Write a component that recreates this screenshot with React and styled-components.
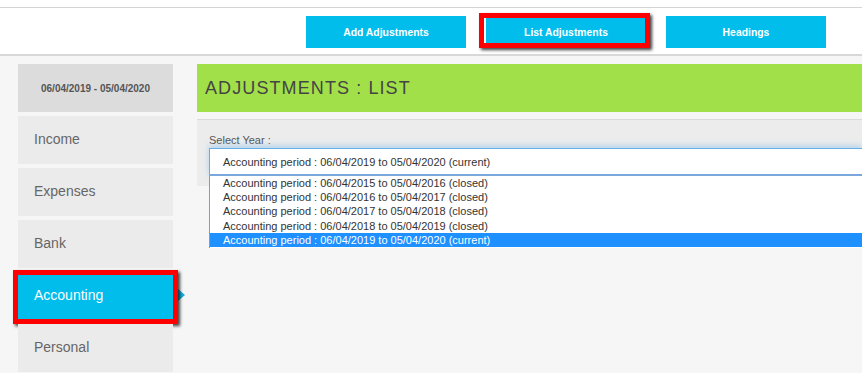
import React from "react";
import styled, { createGlobalStyle, css } from "styled-components";

const GlobalStyle = createGlobalStyle`
  html, body {
    margin: 0;
    padding: 0;
    background: #f6f6f6;
    overflow: hidden;
  }
  body {
    font-family: "Liberation Sans", Arial, sans-serif;
  }
`;

const CYAN = "#00bdeb";

const redFrame = css`
  &::after {
    content: "";
    position: absolute;
    border: 5px solid #ff0000;
    box-shadow: 2px 2px 3px rgba(0, 0, 0, 0.75);
    pointer-events: none;
  }
`;

const TopStrip = styled.div`
  background: #fff;
  padding-top: 7px;
`;

const Header = styled.header`
  height: 49px;
  box-sizing: border-box;
  border-top: 1px solid #d4d4d4;
  border-bottom: 2px solid #d8d8d8;
  display: flex;
  justify-content: flex-end;
  align-items: flex-start;
  gap: 20px;
  padding: 8px 36px 0 0;
`;

const HeaderButton = styled.button`
  position: relative;
  width: 160px;
  height: 32px;
  border: none;
  background: ${CYAN};
  color: #fff;
  font-family: "Liberation Sans", Arial, sans-serif;
  font-weight: bold;
  font-size: 10.4px;
  padding: 0;
  cursor: pointer;

  ${(p) =>
    p.$marked &&
    css`
      ${redFrame}
      &::after {
        left: -7px;
        right: -4px;
        top: -3px;
        bottom: 0;
      }
    `}
`;

const Body = styled.div`
  display: flex;
  gap: 24px;
  padding: 8px 0 0 18px;
`;

const Sidebar = styled.nav`
  flex: 0 0 155px;
  display: flex;
  flex-direction: column;
  gap: 4px;
`;

const PeriodBox = styled.div`
  height: 48px;
  background: #dcdcdc;
  color: #555;
  font-size: 10px;
  font-weight: bold;
  display: flex;
  align-items: center;
  justify-content: center;
`;

const NavItem = styled.div`
  position: relative;
  height: 48px;
  box-sizing: border-box;
  padding: 0 0 3px 16px;
  display: flex;
  align-items: center;
  font-size: 14px;
  background: ${(p) => (p.$active ? CYAN : "#ebebeb")};
  color: ${(p) => (p.$active ? "#fff" : "#666")};

  ${(p) =>
    p.$active &&
    css`
      &::before {
        content: "";
        position: absolute;
        left: calc(100% + 5px);
        top: 17px;
        border-left: 7px solid #14aedc;
        border-top: 6.5px solid transparent;
        border-bottom: 6.5px solid transparent;
      }
      ${redFrame}
      &::after {
        left: -5px;
        right: -5px;
        top: -2px;
        bottom: -4px;
      }
    `}
`;

const Main = styled.main`
  flex: 1;
  min-width: 0;
`;

const TitleBar = styled.div`
  height: 48px;
  background: #a2e04a;
  display: flex;
  align-items: center;
  padding-left: 8px;
`;

const Title = styled.h1`
  margin: 0;
  font-size: 18px;
  font-weight: normal;
  letter-spacing: 1.1px;
  color: #444;
`;

const Panel = styled.section`
  margin-top: 7px;
  border-top: 1px solid #dadada;
  background: #ececec;
  height: 67px;
  padding: 14px 0 0 12px;
  box-sizing: border-box;
`;

const Label = styled.div`
  font-size: 11px;
  line-height: 13px;
  color: #555;
  margin-bottom: 1px;
`;

const SelectWrap = styled.div`
  position: relative;
`;

const SelectBox = styled.div`
  height: 28px;
  box-sizing: border-box;
  background: #fff;
  border: 1px solid #66afe9;
  border-right: none;
  border-bottom: 2px solid #7aa7dc;
  box-shadow: 0 -2px 6px rgba(102, 175, 233, 0.45);
  padding-left: 13px;
  display: flex;
  align-items: center;
  font-size: 11px;
  color: #333;
`;

const OptionList = styled.ul`
  position: absolute;
  top: 100%;
  left: 0;
  right: 0;
  margin: 0;
  padding: 0 0 1px;
  list-style: none;
  background: #fff;
  border-left: 1px solid #7a9cd3;
  z-index: 2;
`;

const Option = styled.li`
  height: 14.2px;
  line-height: 14.2px;
  padding-left: 13px;
  font-size: 11px;
  color: ${(p) => (p.$selected ? "#fff" : "#333")};
  background: ${(p) => (p.$selected ? "#1e90ff" : "transparent")};
  white-space: nowrap;
`;

const periods = [
  { from: "06/04/2015", to: "05/04/2016", state: "closed" },
  { from: "06/04/2016", to: "05/04/2017", state: "closed" },
  { from: "06/04/2017", to: "05/04/2018", state: "closed" },
  { from: "06/04/2018", to: "05/04/2019", state: "closed" },
  { from: "06/04/2019", to: "05/04/2020", state: "current" },
];

const label = (p) => `Accounting period : ${p.from} to ${p.to} (${p.state})`;

const navItems = ["Income", "Expenses", "Bank", "Accounting", "Personal"];

export default function App() {
  const current = periods[periods.length - 1];
  return (
    <>
      <GlobalStyle />
      <TopStrip>
        <Header>
          <HeaderButton>Add Adjustments</HeaderButton>
          <HeaderButton $marked>List Adjustments</HeaderButton>
          <HeaderButton>Headings</HeaderButton>
        </Header>
      </TopStrip>
      <Body>
        <Sidebar>
          <PeriodBox>06/04/2019 - 05/04/2020</PeriodBox>
          {navItems.map((item) => (
            <NavItem key={item} $active={item === "Accounting"}>
              {item}
            </NavItem>
          ))}
        </Sidebar>
        <Main>
          <TitleBar>
            <Title>ADJUSTMENTS : LIST</Title>
          </TitleBar>
          <Panel>
            <Label>Select Year :</Label>
            <SelectWrap>
              <SelectBox>{label(current)}</SelectBox>
              <OptionList>
                {periods.map((p) => (
                  <Option key={p.from} $selected={p === current}>
                    {label(p)}
                  </Option>
                ))}
              </OptionList>
            </SelectWrap>
          </Panel>
        </Main>
      </Body>
    </>
  );
}
